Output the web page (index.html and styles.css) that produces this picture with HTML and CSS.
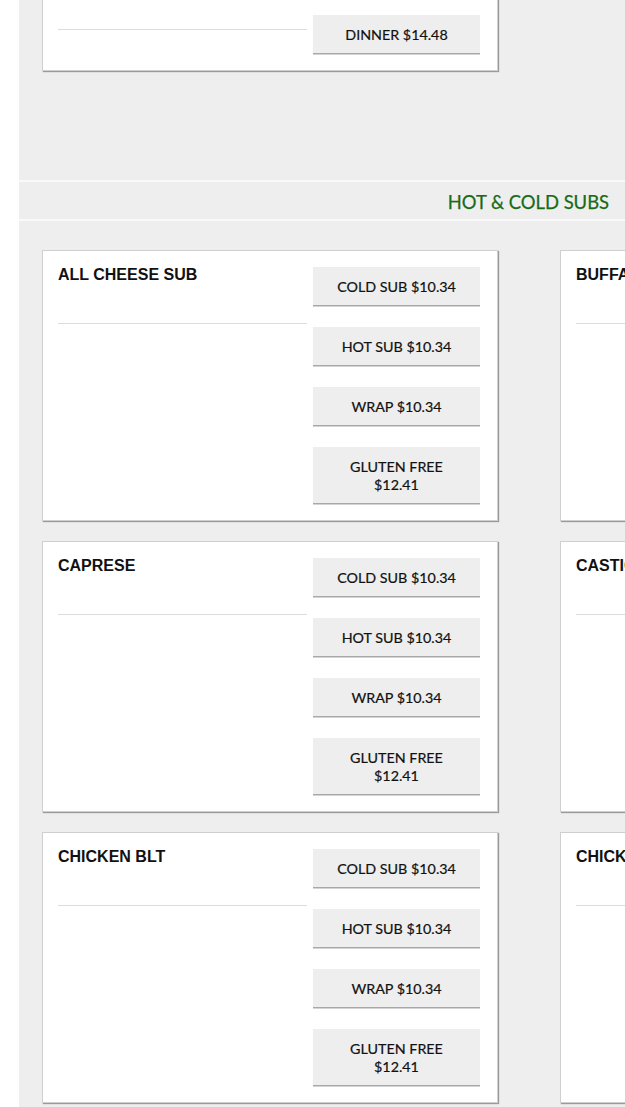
FILE: index.html
```html
<!DOCTYPE html>
<html>
<head>
<meta charset="utf-8">
<link rel="stylesheet" href="styles.css">
</head>
<body>
<div class="gutter"></div>
<main class="main">
  <div class="card card-partial">
    <div class="item">
      <div class="name name-partial"></div>
      <div class="options">
        <div class="btn">DINNER $14.48</div>
      </div>
    </div>
  </div>

  <div class="section-head">HOT &amp; COLD SUBS</div>

  <div class="grid">
    <div class="card">
      <div class="item">
        <div class="name">ALL CHEESE SUB</div>
        <div class="options">
          <div class="btn">COLD SUB $10.34</div>
          <div class="btn">HOT SUB $10.34</div>
          <div class="btn">WRAP $10.34</div>
          <div class="btn">GLUTEN FREE<br>$12.41</div>
        </div>
      </div>
    </div>
    <div class="card">
      <div class="item">
        <div class="name">BUFFALO CHICKEN</div>
        <div class="options">
          <div class="btn">COLD SUB $10.34</div>
          <div class="btn">HOT SUB $10.34</div>
          <div class="btn">WRAP $10.34</div>
          <div class="btn">GLUTEN FREE<br>$12.41</div>
        </div>
      </div>
    </div>
    <div class="card">
      <div class="item">
        <div class="name">CAPRESE</div>
        <div class="options">
          <div class="btn">COLD SUB $10.34</div>
          <div class="btn">HOT SUB $10.34</div>
          <div class="btn">WRAP $10.34</div>
          <div class="btn">GLUTEN FREE<br>$12.41</div>
        </div>
      </div>
    </div>
    <div class="card">
      <div class="item">
        <div class="name">CASTIGLIONE</div>
        <div class="options">
          <div class="btn">COLD SUB $10.34</div>
          <div class="btn">HOT SUB $10.34</div>
          <div class="btn">WRAP $10.34</div>
          <div class="btn">GLUTEN FREE<br>$12.41</div>
        </div>
      </div>
    </div>
    <div class="card">
      <div class="item">
        <div class="name">CHICKEN BLT</div>
        <div class="options">
          <div class="btn">COLD SUB $10.34</div>
          <div class="btn">HOT SUB $10.34</div>
          <div class="btn">WRAP $10.34</div>
          <div class="btn">GLUTEN FREE<br>$12.41</div>
        </div>
      </div>
    </div>
    <div class="card">
      <div class="item">
        <div class="name">CHICKEN CUTLET</div>
        <div class="options">
          <div class="btn">COLD SUB $10.34</div>
          <div class="btn">HOT SUB $10.34</div>
          <div class="btn">WRAP $10.34</div>
          <div class="btn">GLUTEN FREE<br>$12.41</div>
        </div>
      </div>
    </div>
  </div>
</main>
</body>
</html>
```

FILE: styles.css
```css
html, body {
  margin: 0;
  padding: 0;
}
body {
  display: flex;
  width: 625px;
  height: 1107px;
  overflow: hidden;
  background: #fff;
}
.gutter {
  flex: 0 0 19px;
  background: #fff;
}
.main {
  flex: 1 1 auto;
  min-width: 0;
  background: #eee;
  padding: 0 0 40px 0;
  display: flex;
  flex-direction: column;
}
.main > * {
  flex-shrink: 0;
}
.card {
  box-sizing: border-box;
  width: 456px;
  background: #fff;
  border: 1px solid #cfcfcf;
  box-shadow: 1px 1px 1px #9a9a9a;
  padding: 16px 16px 16px 15px;
}
.card-partial {
  margin: -2px 0 0 23px;
}
.item {
  display: grid;
  grid-template-columns: 249px 167px;
  column-gap: 6px;
  align-items: start;
}
.name {
  box-sizing: border-box;
  height: 57px;
  border-bottom: 1px solid #dcdcdc;
  font-family: "Liberation Sans", Arial, sans-serif;
  font-weight: bold;
  font-size: 16px;
  line-height: 16px;
  color: #111;
  padding-top: 0;
  white-space: nowrap;
}
.name-partial {
  height: 15px;
}
.options {
  display: flex;
  flex-direction: column;
  gap: 21px;
}
.btn {
  box-sizing: border-box;
  height: 39px;
  background: #eee;
  border-bottom: 1px solid #a8a8a8;
  box-shadow: 0 1px 0 #d4d4d4;
  padding: 11px 4px 9px;
  text-align: center;
  font-family: Lato, "Open Sans", sans-serif;
  font-size: 14.3px;
  line-height: 18px;
  color: #111;
  -webkit-text-stroke: 0.2px #111;
}
.btn:nth-child(4) {
  height: 57px;
}
.section-head {
  margin-top: 109px;
  box-sizing: border-box;
  height: 41px;
  border-top: 2px solid #f9f9f9;
  border-bottom: 2px solid #f9f9f9;
  width: 606px;
  text-align: right;
  padding: 8px 16px 0 0;
  font-family: Lato, "Open Sans", sans-serif;
  font-size: 18.4px;
  line-height: 24px;
  color: #176b17;
  -webkit-text-stroke: 0.25px #176b17;
}
.grid {
  margin: 29px 0 0 23px;
  display: grid;
  grid-template-columns: 456px 456px;
  column-gap: 62px;
  row-gap: 20px;
}
```
